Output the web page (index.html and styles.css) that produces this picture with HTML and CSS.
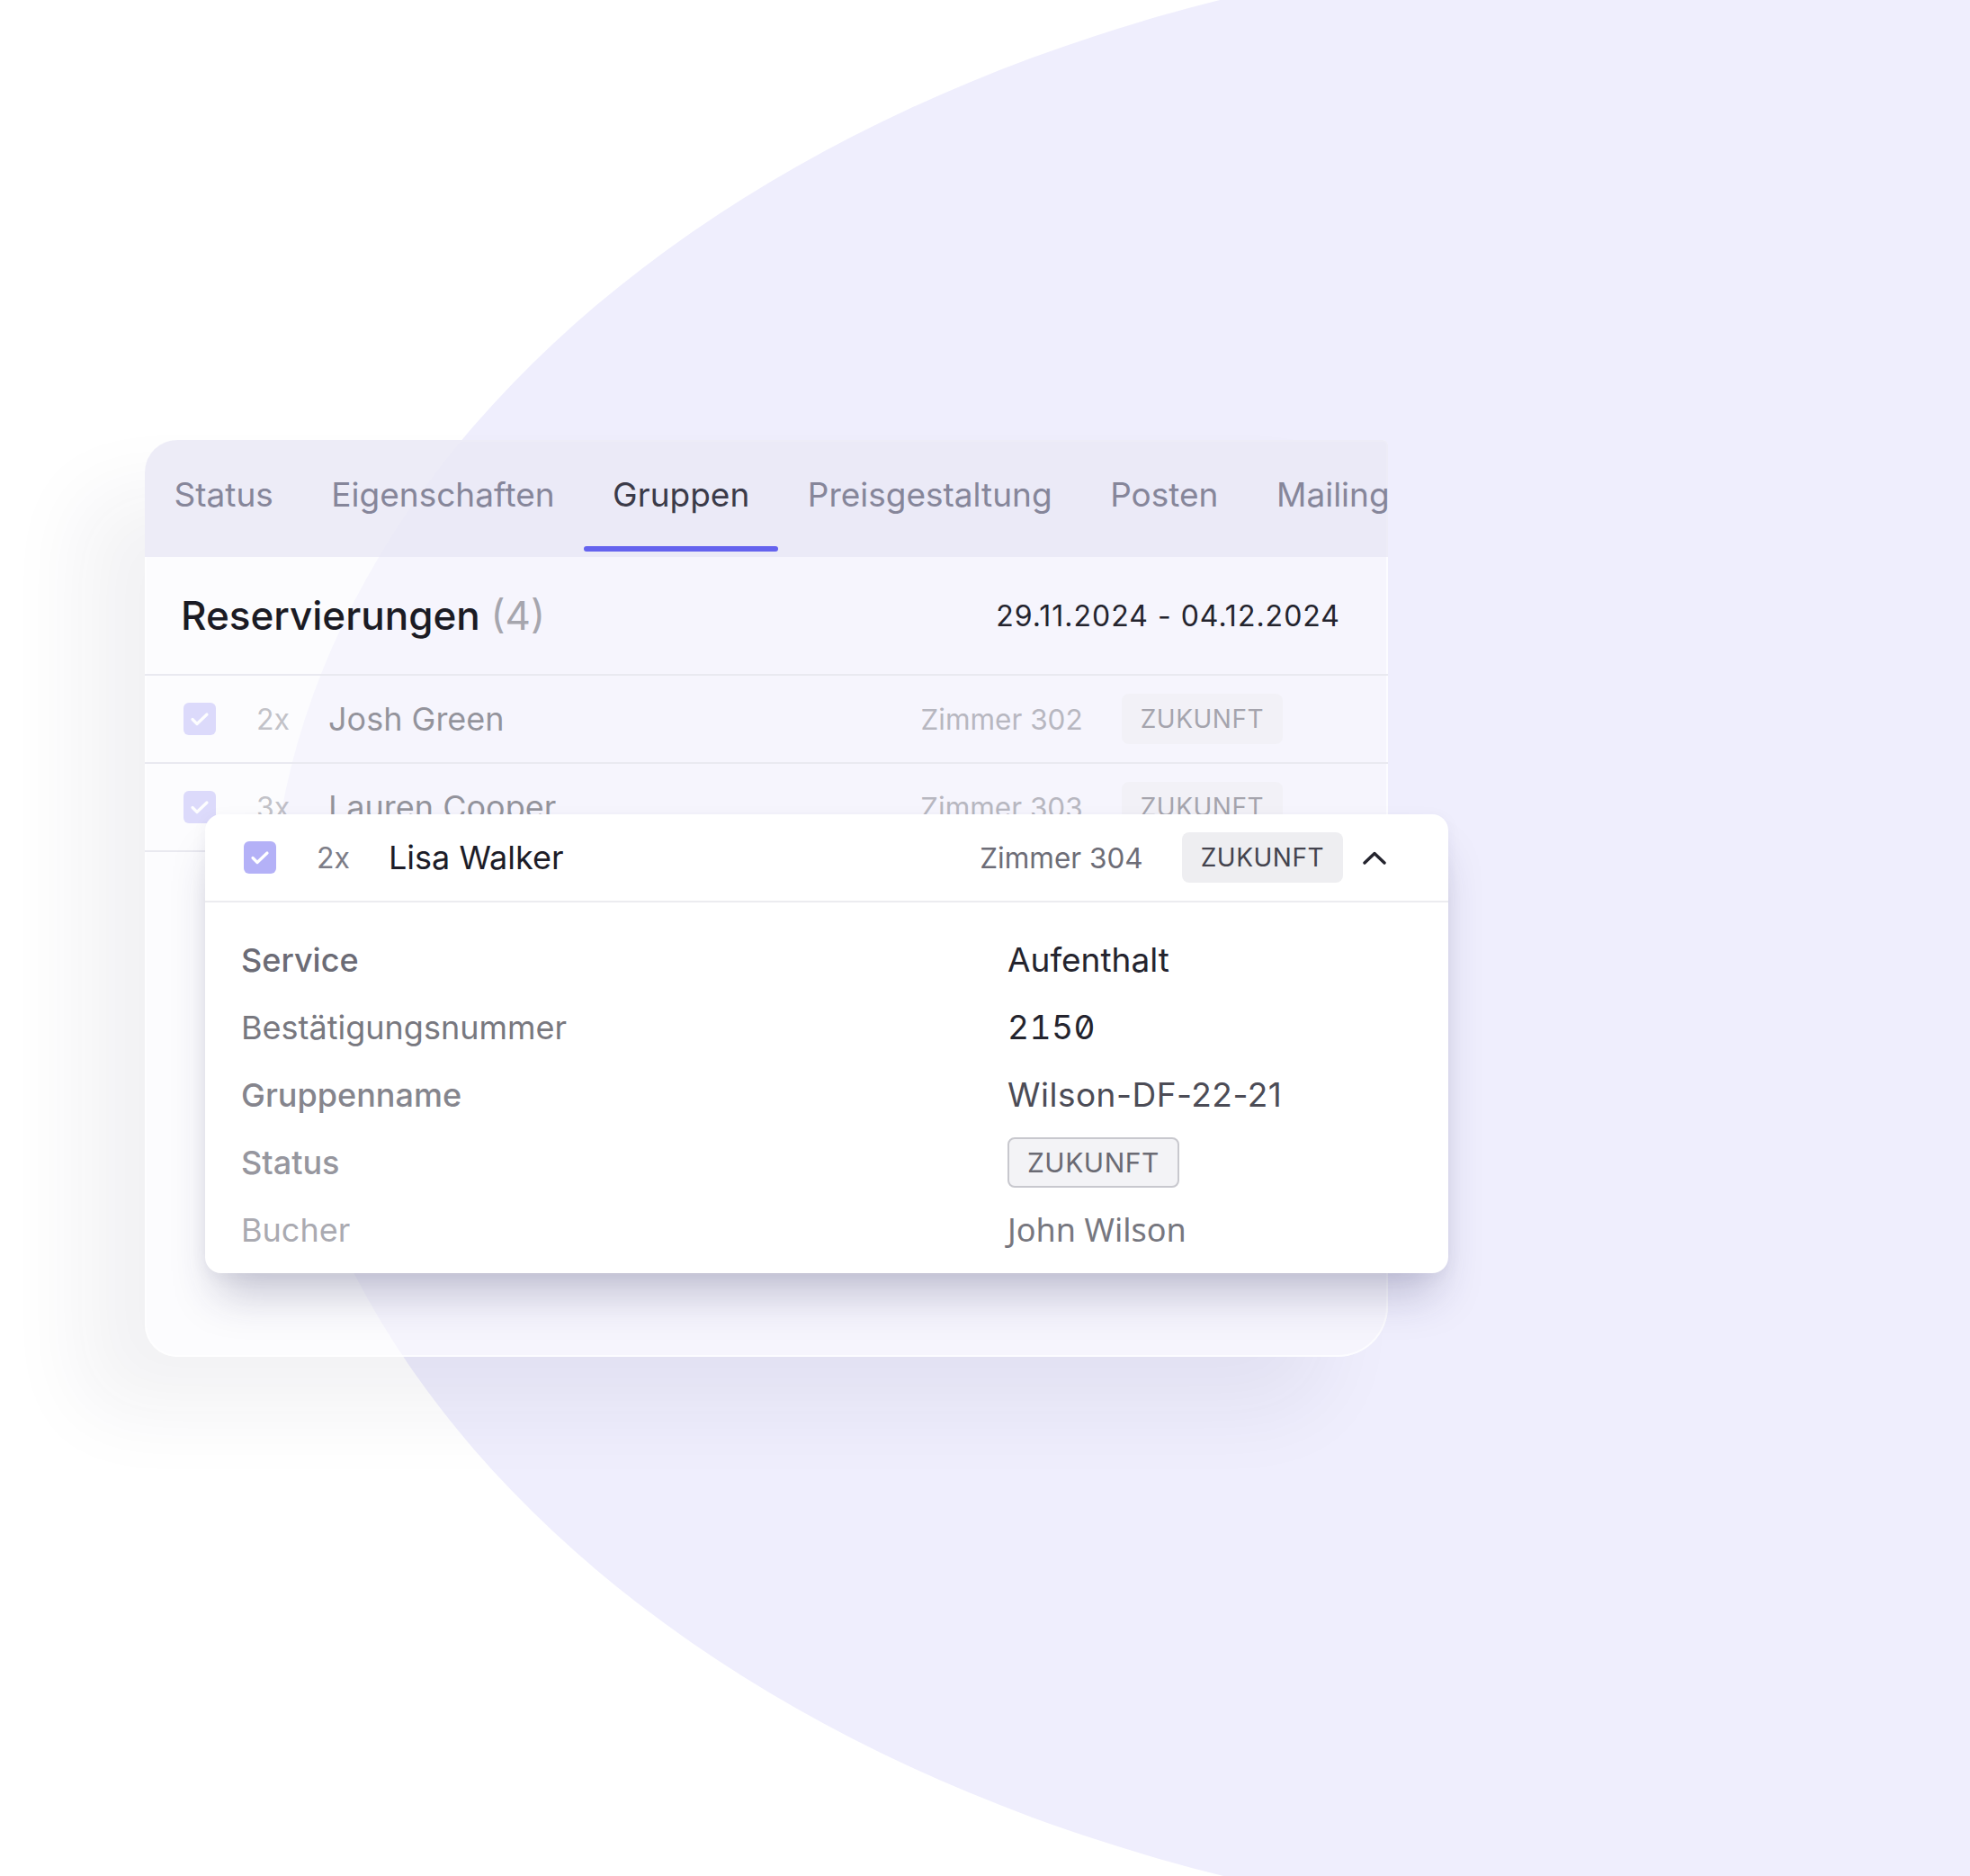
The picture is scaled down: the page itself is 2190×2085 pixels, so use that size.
FILE: index.html
```html
<!DOCTYPE html>
<html lang="de">
<head>
    <meta charset="UTF-8">
    <meta name="viewport" content="width=device-width, initial-scale=1.0">
    <title>Reservierungen</title>
    <link rel="stylesheet" href="styles.css">
</head>
<body>

    <div class="blob"></div>

    <main class="stage">

        <!-- Karte mit Reservierungen -->
        <section class="booking">
            <nav class="tabs">
                <div class="tab">Status</div>
                <div class="tab">Eigenschaften</div>
                <div class="tab active">Gruppen</div>
                <div class="tab">Preisgestaltung</div>
                <div class="tab">Posten</div>
                <div class="tab">Mailing</div>
            </nav>

            <div class="head">
                <h1>Reservierungen <span>(4)</span></h1>
                <div class="dates">29.11.2024 - 04.12.2024</div>
            </div>

            <div class="row faded">
                <span class="check"><svg width="22" height="16" viewBox="0 0 22 16"><path d="M3 8.5l5 5L19 3" fill="none" stroke="#fff" stroke-width="3.2" stroke-linecap="round" stroke-linejoin="round"/></svg></span>
                <span class="qty">2x</span>
                <span class="name">Josh Green</span>
                <span class="room">Zimmer 302</span>
                <span class="badge">ZUKUNFT</span>
                <span class="chev"></span>
            </div>

            <div class="row faded">
                <span class="check"><svg width="22" height="16" viewBox="0 0 22 16"><path d="M3 8.5l5 5L19 3" fill="none" stroke="#fff" stroke-width="3.2" stroke-linecap="round" stroke-linejoin="round"/></svg></span>
                <span class="qty">3x</span>
                <span class="name">Lauren Cooper</span>
                <span class="room">Zimmer 303</span>
                <span class="badge">ZUKUNFT</span>
                <span class="chev"></span>
            </div>
        </section>

        <!-- Aufgeklappte Reservierung -->
        <article class="detail">
            <div class="row">
                <span class="check"><svg width="22" height="16" viewBox="0 0 22 16"><path d="M3 8.5l5 5L19 3" fill="none" stroke="#fff" stroke-width="3.2" stroke-linecap="round" stroke-linejoin="round"/></svg></span>
                <span class="qty">2x</span>
                <span class="name">Lisa Walker</span>
                <span class="room">Zimmer 304</span>
                <span class="badge">ZUKUNFT</span>
                <span class="chev"><svg width="26" height="15" viewBox="0 0 26 15"><path d="M2 13L13 2.5 24 13" fill="none" stroke="#24242e" stroke-width="3.4" stroke-linecap="round" stroke-linejoin="round"/></svg></span>
            </div>

            <div class="facts">
                <div class="label l1">Service</div>
                <div class="value">Aufenthalt</div>

                <div class="label l2">Bestätigungsnummer</div>
                <div class="value num">2150</div>

                <div class="label l3">Gruppenname</div>
                <div class="value soft">Wilson-DF-22-21</div>

                <div class="label l4">Status</div>
                <div class="value"><span class="badge outline">ZUKUNFT</span></div>

                <div class="label l5">Bucher</div>
                <div class="value booker">John Wilson</div>
            </div>
        </article>

    </main>

</body>
</html>
```

FILE: styles.css
```css
* {
    box-sizing: border-box;
}

html, body {
    margin: 0;
    padding: 0;
}

body {
    position: relative;
    width: 2190px;
    height: 2085px;
    overflow: hidden;
    background-color: #ffffff;
    font-family: Inter, "Noto Sans", sans-serif;
    color: #1d1d28;
}

.blob {
    position: absolute;
    left: 300px;
    top: -66px;
    width: 3200px;
    height: 2216px;
    border-radius: 50%;
    background-color: #efeefd;
}

.stage {
    position: relative;
    padding: 489px 0 0 161px;
}

/* Karte hinten */

.booking {
    width: 1382px;
    height: 1019px;
    border-radius: 36px 6px 56px 36px;
    background-color: rgba(250, 250, 254, 0.6);
    box-shadow: inset 0 0 0 2px rgba(255, 255, 255, 0.7), -70px 60px 90px rgba(30, 30, 70, 0.06);
}

.tabs {
    display: flex;
    height: 130px;
    border-radius: 36px 6px 0 0;
    background-color: rgba(232, 231, 245, 0.78);
}

.tab {
    position: relative;
    display: flex;
    align-items: center;
    padding: 0 32px 10px 32.5px;
    font-size: 37px;
    color: #86869a;
    white-space: nowrap;
}

.tab:last-child {
    padding-right: 0;
}

.tab.active {
    color: #3b3b49;
}

.tab.active::after {
    content: "";
    position: absolute;
    left: 0;
    right: 0;
    bottom: 6px;
    height: 6px;
    border-radius: 3px;
    background-color: #6563ee;
}

.head {
    display: flex;
    align-items: center;
    justify-content: space-between;
    height: 132px;
    padding: 0 53px 0 40px;
    border-bottom: 2px solid #e9e9f0;
}

.head h1 {
    margin: 0;
    font-size: 44px;
    font-weight: 500;
    color: #1b1b24;
}

.head h1 span {
    font-weight: 400;
    color: #a6a6ae;
}

.dates {
    font-size: 32px;
    letter-spacing: 1px;
    color: #24242e;
}

/* Zeilen */

.row {
    display: flex;
    align-items: center;
    height: 98px;
    padding: 0 69px 0 43px;
    border-bottom: 2px solid #e9e9f0;
    white-space: nowrap;
}

.row.faded > * {
    opacity: 0.45;
}

.check {
    display: flex;
    align-items: center;
    justify-content: center;
    flex: none;
    width: 36px;
    height: 36px;
    border-radius: 6px;
    background-color: #b4b1f7;
}

.row.faded .check {
    background-color: #c7c4fa;
    opacity: 0.6;
}

.qty {
    width: 80px;
    margin-left: 45px;
    font-size: 32px;
    color: #7d7d87;
}

.name {
    flex: 1;
    font-size: 36px;
    color: #1d1d28;
}

.room {
    margin-right: 43px;
    font-size: 31.5px;
    color: #6d6d77;
}

.badge {
    display: flex;
    align-items: center;
    height: 56px;
    padding: 0 21px;
    border-radius: 8px;
    background-color: #eeeef1;
    font-size: 28px;
    letter-spacing: 0.5px;
    color: #44444e;
}

.chev {
    display: flex;
    width: 26px;
    margin-left: 22px;
}

/* Details */

.detail {
    position: absolute;
    left: 228px;
    top: 905px;
    width: 1382px;
    height: 510px;
    overflow: hidden;
    border-radius: 18px;
    background-color: #ffffff;
    box-shadow: 0 36px 50px -14px rgba(40, 40, 90, 0.26), 0 4px 18px rgba(40, 40, 80, 0.05);
}

.detail .row {
    border-bottom-color: #ececf0;
}

.facts {
    display: grid;
    grid-template-columns: 852px 1fr;
    grid-auto-rows: 75px;
    align-items: center;
    padding: 26px 0 0 40px;
    font-size: 37px;
}

.label {
    font-size: 36px;
    font-weight: 500;
}

.l1 { color: #6b6b75; }
.l2 { color: #78787f; font-weight: 400; }
.l3 { color: #85858d; }
.l4 { color: #96969e; }
.l5 { color: #aaaab1; font-weight: 400; }

.value {
    color: #24242e;
}

.value.num {
    font-feature-settings: "zero" 1, "tnum" 1;
    letter-spacing: 0.5px;
}

.value.soft {
    color: #4c4c56;
    letter-spacing: 0.5px;
}

.value .badge {
    display: inline-flex;
}

.badge.outline {
    padding: 0 20px;
    border: 2px solid #c8c8ce;
    background-color: #f3f3f6;
    font-size: 30px;
    color: #6a6a73;
}

.value.booker {
    font-family: "Noto Sans", sans-serif;
    font-size: 36px;
    color: #77777f;
}
```
